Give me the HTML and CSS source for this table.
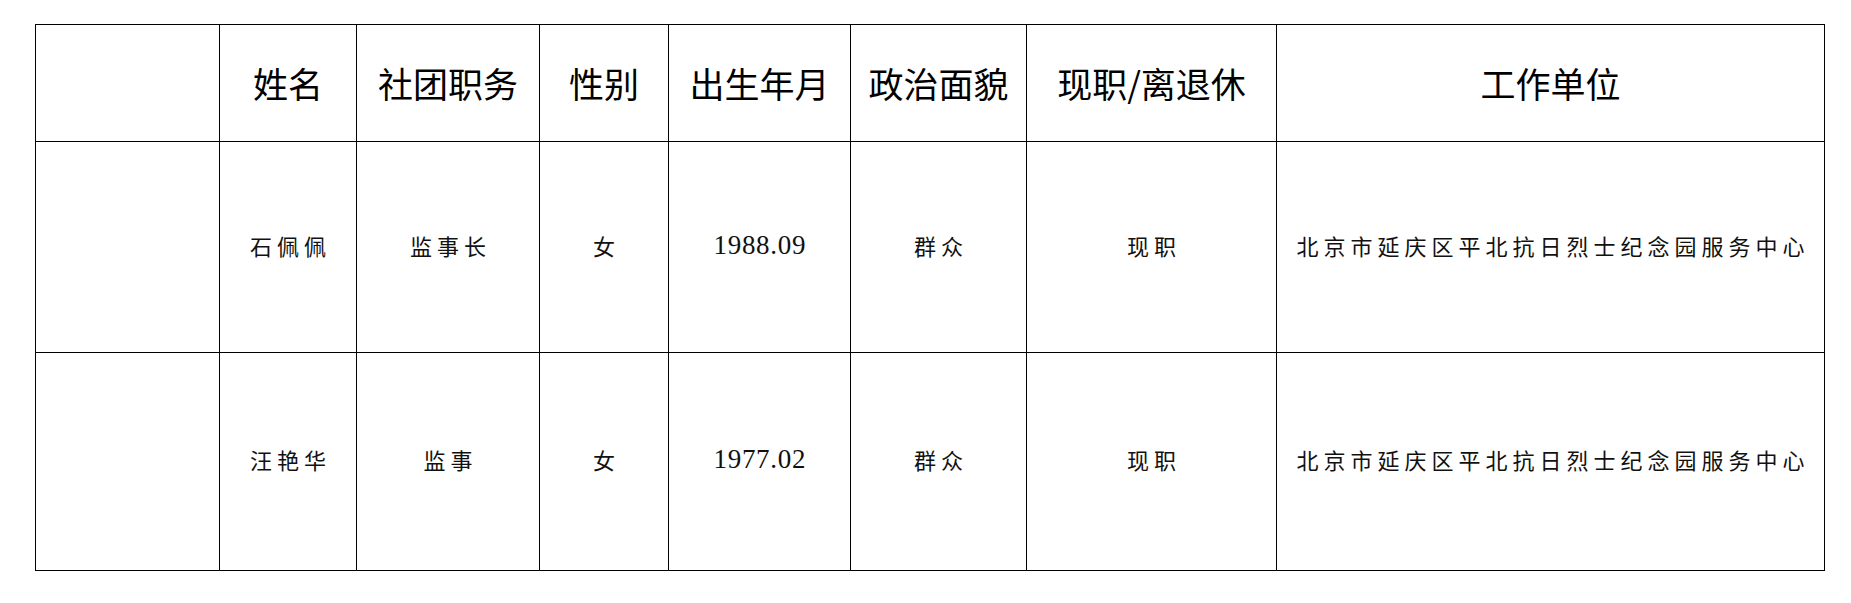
FILE: index.html
```html
<!DOCTYPE html>
<html lang="zh-CN">
<head>
<meta charset="utf-8">
<title>监事会成员</title>
<link rel="stylesheet" href="styles.css">
</head>
<body>
<table class="roster">
  <colgroup>
    <col class="c0"><col class="c1"><col class="c2"><col class="c3"><col class="c4"><col class="c5"><col class="c6"><col class="c7">
  </colgroup>
  <tr class="head">
    <th></th>
    <th>姓名</th>
    <th>社团职务</th>
    <th>性别</th>
    <th>出生年月</th>
    <th>政治面貌</th>
    <th>现职/离退休</th>
    <th>工作单位</th>
  </tr>
  <tr class="row1">
    <td></td>
    <td>石佩佩</td>
    <td>监事长</td>
    <td>女</td>
    <td class="num">1988.09</td>
    <td>群众</td>
    <td>现职</td>
    <td>北京市延庆区平北抗日烈士纪念园服务中心</td>
  </tr>
  <tr class="row2">
    <td></td>
    <td>汪艳华</td>
    <td>监事</td>
    <td>女</td>
    <td class="num">1977.02</td>
    <td>群众</td>
    <td>现职</td>
    <td>北京市延庆区平北抗日烈士纪念园服务中心</td>
  </tr>
</table>
</body>
</html>
```

FILE: styles.css
```css
html, body {
  margin: 0;
  padding: 0;
  background: #ffffff;
}

.roster {
  margin: 24px 0 0 35px;
  border-collapse: collapse;
  table-layout: fixed;
  width: 1790px;
}

.c0 { width: 184px; }
.c1 { width: 137px; }
.c2 { width: 183px; }
.c3 { width: 129px; }
.c4 { width: 182px; }
.c5 { width: 176px; }
.c6 { width: 250px; }
.c7 { width: 548px; }

.roster th,
.roster td {
  border: 1px solid #000000;
  padding: 0;
  text-align: center;
  vertical-align: middle;
  white-space: nowrap;
}

.roster th {
  font-family: "Noto Sans CJK SC", "Noto Sans", sans-serif;
  font-weight: 400;
  font-size: 35px;
  color: #000000;
  line-height: 1.2;
}

.roster td {
  font-family: "Noto Sans CJK SC", "Noto Sans", sans-serif;
  font-weight: 400;
  font-size: 22px;
  letter-spacing: 5px;
  padding: 0 0 4px 5px;
  color: #111111;
  line-height: 1.2;
}

.roster td.num {
  font-family: "Liberation Serif", "Times New Roman", serif;
  font-size: 27px;
  letter-spacing: 0.7px;
  padding: 0 0 4px 0.7px;
}

.head { height: 117px; }
.row1 { height: 211px; }
.row2 { height: 218px; }
```
